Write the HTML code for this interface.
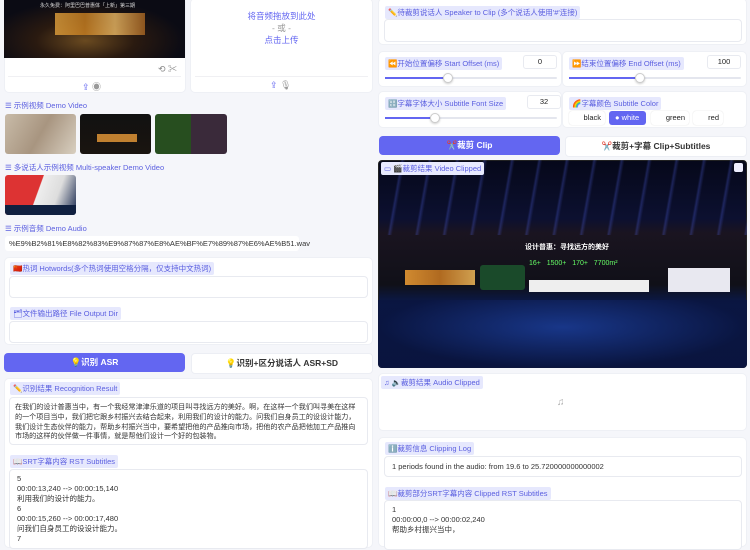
<!DOCTYPE html>
<html><head><meta charset="utf-8"><style>
*{box-sizing:border-box;margin:0;padding:0}
body{width:750px;height:536px;overflow:hidden;background:#f5f6fa;font-family:"Liberation Sans","Noto Sans CJK SC",sans-serif;font-size:8px;color:#222;position:relative}
.a{position:absolute}
.p{position:absolute;background:#fff;border-radius:5px;border:1px solid #eef0f5}
.lab{position:absolute;background:#e6e8fd;color:#5b5fe0;font-size:7.5px;padding:1px 3px;border-radius:2px;white-space:nowrap}
.ta{position:absolute;background:#fff;border:1px solid #e8eaf0;border-radius:4px;font-size:7.5px;line-height:10px;padding:4px 7px;color:#333;overflow:hidden}
.sec{position:absolute;color:#5b5fe0;font-size:7.5px;white-space:nowrap}
.btn{position:absolute;border-radius:4px;font-size:8.5px;font-weight:bold;text-align:center;line-height:19px}
.pb{background:#6366f1;color:#fff}
.wb{background:#fff;color:#333;border:1px solid #eceef4}
.sl{position:absolute;height:2px;background:#e4e6ee;border-radius:1px}
.sl i{position:absolute;left:0;top:0;height:2px;background:#6366f1}
.sl b{position:absolute;top:-4px;width:10px;height:10px;border-radius:50%;background:#fff;border:1px solid #ccc;box-shadow:0 1px 2px rgba(0,0,0,.2)}
.num{position:absolute;width:34px;height:14px;border:1px solid #e8eaf0;border-radius:3px;background:#fff;text-align:center;font-size:7.5px;line-height:12px}
</style></head><body>

<div class="p" style="left:4px;top:-2px;width:182px;height:95px"></div>
<div class="a" style="left:4px;top:0;width:181px;height:58px;background:radial-gradient(ellipse at 45% 70%,#6a4a20 0,#2a1a10 35%,#0b0b14 70%)"></div>
<div class="a" style="left:55px;top:13px;width:90px;height:22px;background:linear-gradient(90deg,#d89a3a,#c07a20,#e0b060,#a06020);opacity:.85"></div>
<div class="a" style="left:40px;top:2px;font-size:5px;color:#ddd">永久免费：阿里巴巴普惠体「上新」第三期</div>
<div class="a" style="left:158px;top:62px;font-size:9px;color:#888">⟲ ✂</div>
<div class="a" style="left:8px;top:76px;width:173px;height:1px;background:#f0f0f3"></div>
<div class="a" style="left:82px;top:80px;font-size:9px;color:#6366f1">⇪ <span style="color:#999">◉</span></div>

<div class="p" style="left:190px;top:-2px;width:183px;height:95px"></div>
<div class="a" style="left:190px;top:10px;width:183px;text-align:center;color:#6366f1;font-size:8.5px;line-height:12px">将音频拖放到此处<br><span style="color:#999">- 或 -</span><br>点击上传</div>
<div class="a" style="left:195px;top:76px;width:173px;height:1px;background:#f0f0f3"></div>
<div class="a" style="left:270px;top:80px;font-size:9px;color:#6366f1">⇪ <span style="color:#999">🎙</span></div>

<div class="sec" style="left:5px;top:100px">☰ 示例视频 Demo Video</div>
<div class="a" style="left:5px;top:114px;width:71px;height:40px;border-radius:3px;background:linear-gradient(120deg,#c8bba8,#a89580,#d8cfc0)"></div>
<div class="a" style="left:80px;top:114px;width:71px;height:40px;border-radius:3px;background:linear-gradient(#111,#1a1410);"></div>
<div class="a" style="left:97px;top:134px;width:40px;height:8px;background:#c08030"></div>
<div class="a" style="left:155px;top:114px;width:72px;height:40px;border-radius:3px;background:linear-gradient(90deg,#274e1f 50%,#3a2a3a 50%)"></div>
<div class="sec" style="left:5px;top:162px">☰ 多说话人示例视频 Multi-speaker Demo Video</div>
<div class="a" style="left:5px;top:175px;width:71px;height:40px;border-radius:3px;background:linear-gradient(110deg,#d33 0,#d33 45%,#eee 46%,#ddd 70%,#1a2a50 100%)"></div>
<div class="a" style="left:5px;top:205px;width:71px;height:10px;background:#102040;border-radius:0 0 3px 3px"></div>
<div class="sec" style="left:5px;top:223px">☰ 示例音频 Demo Audio</div>
<div class="a" style="left:5px;top:236px;width:294px;height:15px;background:#fff;border-radius:3px;font-size:7.5px;line-height:15px;padding-left:4px;color:#333">%E9%B2%81%E8%82%83%E9%87%87%E8%AE%BF%E7%89%87%E6%AE%B51.wav</div>

<div class="p" style="left:4px;top:257px;width:369px;height:88px"></div>
<div class="lab" style="left:10px;top:262px">🇨🇳热词 Hotwords(多个热词使用空格分隔，仅支持中文热词)</div>
<div class="ta" style="left:9px;top:276px;width:359px;height:22px"></div>
<div class="lab" style="left:10px;top:307px">🗂文件输出路径 File Output Dir</div>
<div class="ta" style="left:9px;top:321px;width:359px;height:22px"></div>

<div class="btn pb" style="left:4px;top:353px;width:181px">💡识别 ASR</div>
<div class="btn wb" style="left:191px;top:353px;width:182px">💡识别+区分说话人 ASR+SD</div>

<div class="p" style="left:4px;top:378px;width:369px;height:170px"></div>
<div class="lab" style="left:10px;top:382px">✏️识别结果 Recognition Result</div>
<div class="ta" style="left:9px;top:397px;width:359px;height:48px;line-height:9.8px;font-size:7.1px;padding:5px 5px 4px 5px">在我们的设计普惠当中，有一个我经常津津乐道的项目叫寻找远方的美好。啊，在这样一个我们叫寻美在这样的一个项目当中，我们把它跟乡村振兴去结合起来，利用我们的设计的能力。问我们自身员工的设设计能力，我们设计生态伙伴的能力，帮助乡村振兴当中，要希望把他的产品推向市场，把他的农产品把他加工产品推向市场的这样的伙伴做一件事情，就是帮他们设计一个好的包装物。</div>
<div class="lab" style="left:10px;top:455px">📖SRT字幕内容 RST Subtitles</div>
<div class="ta" style="left:9px;top:469px;width:359px;height:80px">5<br>00:00:13,240 --&gt; 00:00:15,140<br>利用我们的设计的能力。<br>6<br>00:00:15,260 --&gt; 00:00:17,480<br>问我们自身员工的设设计能力。<br>7</div>

<div class="p" style="left:378px;top:-2px;width:369px;height:47px"></div>
<div class="lab" style="left:385px;top:6px">✏️待裁剪说话人 Speaker to Clip (多个说话人使用'#'连接)</div>
<div class="ta" style="left:384px;top:19px;width:358px;height:23px"></div>

<div class="p" style="left:378px;top:51px;width:184px;height:36px"></div>
<div class="lab" style="left:385px;top:57px">⏪开始位置偏移 Start Offset (ms)</div>
<div class="num" style="left:523px;top:55px">0</div>
<div class="sl" style="left:385px;top:77px;width:172px"><i style="width:58px"></i><b style="left:58px"></b></div>
<div class="p" style="left:562px;top:51px;width:185px;height:36px"></div>
<div class="lab" style="left:569px;top:57px">⏩结束位置偏移 End Offset (ms)</div>
<div class="num" style="left:707px;top:55px">100</div>
<div class="sl" style="left:569px;top:77px;width:172px"><i style="width:66px"></i><b style="left:66px"></b></div>

<div class="p" style="left:378px;top:91px;width:184px;height:37px"></div>
<div class="lab" style="left:385px;top:97px">🔠字幕字体大小 Subtitle Font Size</div>
<div class="num" style="left:527px;top:95px">32</div>
<div class="sl" style="left:385px;top:117px;width:172px"><i style="width:45px"></i><b style="left:45px"></b></div>
<div class="p" style="left:562px;top:91px;width:185px;height:37px"></div>
<div class="lab" style="left:569px;top:97px">🌈字幕颜色 Subtitle Color</div>
<div class="a" style="left:569px;top:111px;width:36px;height:14px;background:#fff;border-radius:3px;font-size:7.5px;line-height:14px;text-align:right;padding-right:4px;box-shadow:0 0 1px #ccc">black</div>
<div class="a" style="left:609px;top:111px;width:37px;height:14px;background:#6366f1;color:#fff;border-radius:3px;font-size:7.5px;line-height:14px;padding-left:6px">● white</div>
<div class="a" style="left:651px;top:111px;width:38px;height:14px;background:#fff;border-radius:3px;font-size:7.5px;line-height:14px;text-align:right;padding-right:4px;box-shadow:0 0 1px #ccc">green</div>
<div class="a" style="left:693px;top:111px;width:30px;height:14px;background:#fff;border-radius:3px;font-size:7.5px;line-height:14px;text-align:right;padding-right:4px;box-shadow:0 0 1px #ccc">red</div>

<div class="btn pb" style="left:379px;top:136px;width:181px">✂️裁剪 Clip</div>
<div class="btn wb" style="left:565px;top:136px;width:182px">✂️裁剪+字幕 Clip+Subtitles</div>

<div class="a" style="left:378px;top:160px;width:369px;height:208px;border-radius:4px;background:linear-gradient(#06081a 0,#0c1030 28%,#1a1420 35%,#101018 60%,#0a1a50 70%,#061030 100%);border:1px solid #222"></div>
<div class="a" style="left:378px;top:160px;width:369px;height:75px;background:repeating-linear-gradient(100deg,transparent 0,transparent 22px,rgba(90,110,255,.25) 24px,transparent 27px)"></div>
<div class="a" style="left:405px;top:270px;width:70px;height:15px;background:linear-gradient(90deg,#d08a30,#b06a20,#d0a050)"></div>
<div class="a" style="left:480px;top:265px;width:45px;height:25px;background:#1a4a2a;border-radius:3px"></div>
<div class="a" style="left:529px;top:280px;width:120px;height:12px;background:#eee"></div>
<div class="a" style="left:668px;top:268px;width:62px;height:24px;background:#e8e8f0"></div>
<div class="a" style="left:525px;top:242px;font-size:7px;color:#fff;font-weight:bold">设计普惠：寻找远方的美好</div>
<div class="a" style="left:529px;top:260px;font-size:7px;color:#6f6">16+ &nbsp; 1500+ &nbsp; 170+ &nbsp; 7700m²</div>
<div class="a" style="left:378px;top:300px;width:369px;height:68px;background:radial-gradient(ellipse at 50% 40%,#1a3a90,#0a1540 70%);border-radius:0 0 4px 4px;opacity:.9"></div>
<div class="lab" style="left:381px;top:162px;background:#e8eafe">▭ 🎬裁剪结果 Video Clipped</div>
<div class="a" style="left:734px;top:163px;width:9px;height:9px;background:#eef;border-radius:2px"></div>

<div class="p" style="left:378px;top:373px;width:369px;height:58px"></div>
<div class="lab" style="left:381px;top:376px">♫ 🔈裁剪结果 Audio Clipped</div>
<div class="a" style="left:557px;top:397px;font-size:10px;color:#aaa">♫</div>

<div class="p" style="left:378px;top:437px;width:369px;height:110px"></div>
<div class="lab" style="left:385px;top:442px">ℹ️裁剪信息 Clipping Log</div>
<div class="ta" style="left:384px;top:456px;width:358px;height:21px;line-height:12px">1 periods found in the audio: from 19.6 to 25.720000000000002</div>
<div class="lab" style="left:385px;top:487px">📖裁剪部分SRT字幕内容 Clipped RST Subtitles</div>
<div class="ta" style="left:384px;top:500px;width:358px;height:50px">1<br>00:00:00,0 --&gt; 00:00:02,240<br>帮助乡村振兴当中，</div>
</body></html>
